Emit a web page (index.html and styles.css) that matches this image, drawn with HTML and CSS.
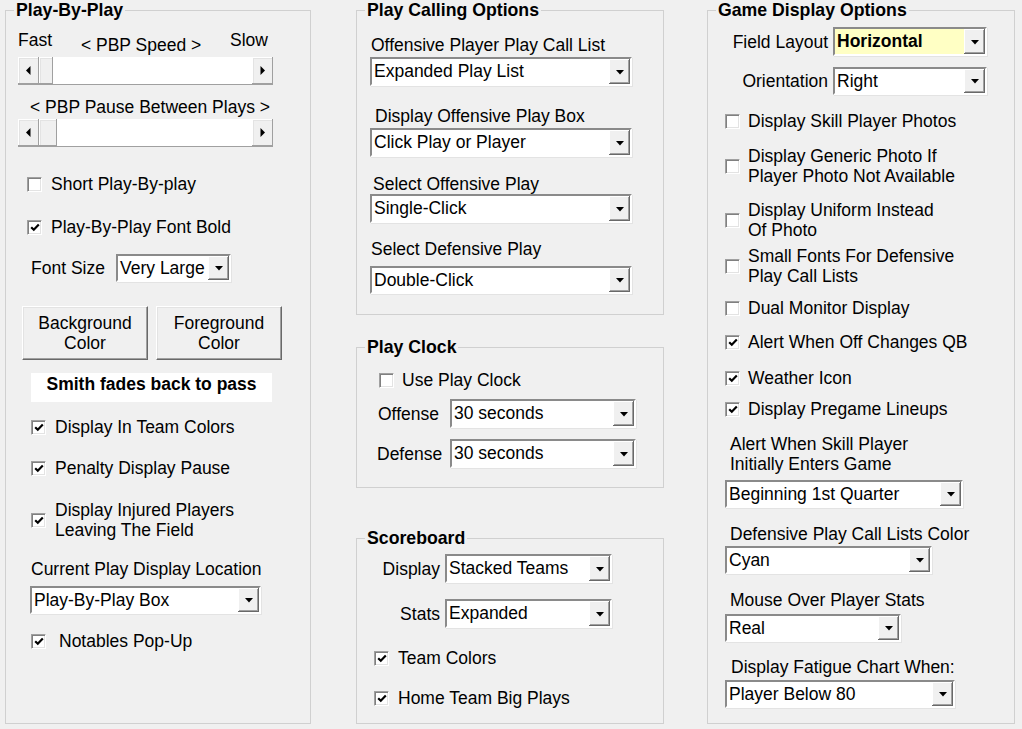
FILE: index.html
```html
<!DOCTYPE html>
<html>
<head>
<meta charset="utf-8">
<link rel="stylesheet" href="styles.css">
</head>
<body>
<div class="page">
  <section class="group g-left">
    <div class="title">Play-By-Play</div>
    <div class="speed-row"><span>Fast</span><span class="speed-mid">&lt; PBP Speed &gt;</span><span>Slow</span></div>
    <div class="hscroll sb1">
      <span class="sbtn"><svg width="5" height="9" viewBox="0 0 5 9"><polygon points="4.5,0 4.5,9 0,4.5" fill="#000"/></svg></span>
      <span class="thumb t1"></span><span class="track"></span>
      <span class="sbtn"><svg width="5" height="9" viewBox="0 0 5 9"><polygon points="0.5,0 0.5,9 5,4.5" fill="#000"/></svg></span>
    </div>
    <div class="pause">&lt; PBP Pause Between Plays &gt;</div>
    <div class="hscroll sb2">
      <span class="sbtn"><svg width="5" height="9" viewBox="0 0 5 9"><polygon points="4.5,0 4.5,9 0,4.5" fill="#000"/></svg></span>
      <span class="thumb t2"></span><span class="track"></span>
      <span class="sbtn"><svg width="5" height="9" viewBox="0 0 5 9"><polygon points="0.5,0 0.5,9 5,4.5" fill="#000"/></svg></span>
    </div>
    <div class="chk c-short"><span class="box"></span><span class="lbl g10">Short Play-By-play</span></div>
    <div class="chk c-bold"><span class="box"><svg width="10" height="9" viewBox="0 0 10 9"><path d="M1.2 4.2 L3.8 6.8 L8.8 1.6" stroke="#000" stroke-width="2.2" fill="none"/></svg></span><span class="lbl g10">Play-By-Play Font Bold</span></div>
    <div class="row r-fontsize"><span class="fs-label">Font Size</span>
      <div class="combo w115"><span class="cv">Very Large</span><span class="dd"><svg width="8" height="5" viewBox="0 0 8 5"><polygon points="0,0 8,0 4,4.5" fill="#000"/></svg></span></div>
    </div>
    <div class="row r-buttons">
      <div class="btn">Background<br>Color</div>
      <div class="btn">Foreground<br>Color</div>
    </div>
    <div class="playlabel">Smith fades back to pass</div>
    <div class="chk c-team"><span class="box"><svg width="10" height="9" viewBox="0 0 10 9"><path d="M1.2 4.2 L3.8 6.8 L8.8 1.6" stroke="#000" stroke-width="2.2" fill="none"/></svg></span><span class="lbl g10">Display In Team Colors</span></div>
    <div class="chk c-pen"><span class="box"><svg width="10" height="9" viewBox="0 0 10 9"><path d="M1.2 4.2 L3.8 6.8 L8.8 1.6" stroke="#000" stroke-width="2.2" fill="none"/></svg></span><span class="lbl g10">Penalty Display Pause</span></div>
    <div class="chk c-inj"><span class="box"><svg width="10" height="9" viewBox="0 0 10 9"><path d="M1.2 4.2 L3.8 6.8 L8.8 1.6" stroke="#000" stroke-width="2.2" fill="none"/></svg></span><span class="lbl g10">Display Injured Players<br>Leaving The Field</span></div>
    <div class="txt t-cur">Current Play Display Location</div>
    <div class="combo w231 cb-cur"><span class="cv">Play-By-Play Box</span><span class="dd"><svg width="8" height="5" viewBox="0 0 8 5"><polygon points="0,0 8,0 4,4.5" fill="#000"/></svg></span></div>
    <div class="chk c-not"><span class="box"><svg width="10" height="9" viewBox="0 0 10 9"><path d="M1.2 4.2 L3.8 6.8 L8.8 1.6" stroke="#000" stroke-width="2.2" fill="none"/></svg></span><span class="lbl g14">Notables Pop-Up</span></div>
  </section>

  <div class="col-mid">
    <section class="group g-a">
      <div class="title">Play Calling Options</div>
      <div class="txt a-l1">Offensive Player Play Call List</div>
      <div class="combo w262 a-c1"><span class="cv">Expanded Play List</span><span class="dd"><svg width="8" height="5" viewBox="0 0 8 5"><polygon points="0,0 8,0 4,4.5" fill="#000"/></svg></span></div>
      <div class="txt a-l2">Display Offensive Play Box</div>
      <div class="combo w262 a-c2"><span class="cv">Click Play or Player</span><span class="dd"><svg width="8" height="5" viewBox="0 0 8 5"><polygon points="0,0 8,0 4,4.5" fill="#000"/></svg></span></div>
      <div class="txt a-l3">Select Offensive Play</div>
      <div class="combo w262 a-c3"><span class="cv">Single-Click</span><span class="dd"><svg width="8" height="5" viewBox="0 0 8 5"><polygon points="0,0 8,0 4,4.5" fill="#000"/></svg></span></div>
      <div class="txt a-l4">Select Defensive Play</div>
      <div class="combo w262 a-c4"><span class="cv">Double-Click</span><span class="dd"><svg width="8" height="5" viewBox="0 0 8 5"><polygon points="0,0 8,0 4,4.5" fill="#000"/></svg></span></div>
    </section>

    <section class="group g-b">
      <div class="title">Play Clock</div>
      <div class="chk b-use"><span class="box"></span><span class="lbl g9">Use Play Clock</span></div>
      <div class="row b-off"><span class="b-label">Offense</span>
        <div class="combo w186"><span class="cv">30 seconds</span><span class="dd"><svg width="8" height="5" viewBox="0 0 8 5"><polygon points="0,0 8,0 4,4.5" fill="#000"/></svg></span></div>
      </div>
      <div class="row b-def"><span class="b-label">Defense</span>
        <div class="combo w186"><span class="cv">30 seconds</span><span class="dd"><svg width="8" height="5" viewBox="0 0 8 5"><polygon points="0,0 8,0 4,4.5" fill="#000"/></svg></span></div>
      </div>
    </section>

    <section class="group g-c">
      <div class="title">Scoreboard</div>
      <div class="row c-disp"><span class="c-label">Display</span>
        <div class="combo w167"><span class="cv">Stacked Teams</span><span class="dd"><svg width="8" height="5" viewBox="0 0 8 5"><polygon points="0,0 8,0 4,4.5" fill="#000"/></svg></span></div>
      </div>
      <div class="row c-stats"><span class="c-label">Stats</span>
        <div class="combo w167"><span class="cv">Expanded</span><span class="dd"><svg width="8" height="5" viewBox="0 0 8 5"><polygon points="0,0 8,0 4,4.5" fill="#000"/></svg></span></div>
      </div>
      <div class="chk c-tc"><span class="box"><svg width="10" height="9" viewBox="0 0 10 9"><path d="M1.2 4.2 L3.8 6.8 L8.8 1.6" stroke="#000" stroke-width="2.2" fill="none"/></svg></span><span class="lbl g10">Team Colors</span></div>
      <div class="chk c-home"><span class="box"><svg width="10" height="9" viewBox="0 0 10 9"><path d="M1.2 4.2 L3.8 6.8 L8.8 1.6" stroke="#000" stroke-width="2.2" fill="none"/></svg></span><span class="lbl g10">Home Team Big Plays</span></div>
    </section>
  </div>

  <section class="group g-right">
    <div class="title">Game Display Options</div>
    <div class="row r-field"><span class="r-label">Field Layout</span>
      <div class="combo w154 yellow"><span class="cv bold">Horizontal</span><span class="dd"><svg width="8" height="5" viewBox="0 0 8 5"><polygon points="0,0 8,0 4,4.5" fill="#000"/></svg></span></div>
    </div>
    <div class="row r-orient"><span class="r-label">Orientation</span>
      <div class="combo w154"><span class="cv">Right</span><span class="dd"><svg width="8" height="5" viewBox="0 0 8 5"><polygon points="0,0 8,0 4,4.5" fill="#000"/></svg></span></div>
    </div>
    <div class="chk rc rc1"><span class="box"></span><span class="lbl g9">Display Skill Player Photos</span></div>
    <div class="chk rc rc2"><span class="box"></span><span class="lbl g9">Display Generic Photo If<br>Player Photo Not Available</span></div>
    <div class="chk rc rc3"><span class="box"></span><span class="lbl g9">Display Uniform Instead<br>Of Photo</span></div>
    <div class="chk rc rc4"><span class="box"></span><span class="lbl g9">Small Fonts For Defensive<br>Play Call Lists</span></div>
    <div class="chk rc rc5"><span class="box"></span><span class="lbl g9">Dual Monitor Display</span></div>
    <div class="chk rc rc6"><span class="box"><svg width="10" height="9" viewBox="0 0 10 9"><path d="M1.2 4.2 L3.8 6.8 L8.8 1.6" stroke="#000" stroke-width="2.2" fill="none"/></svg></span><span class="lbl g9">Alert When Off Changes QB</span></div>
    <div class="chk rc rc7"><span class="box"><svg width="10" height="9" viewBox="0 0 10 9"><path d="M1.2 4.2 L3.8 6.8 L8.8 1.6" stroke="#000" stroke-width="2.2" fill="none"/></svg></span><span class="lbl g9">Weather Icon</span></div>
    <div class="chk rc rc8"><span class="box"><svg width="10" height="9" viewBox="0 0 10 9"><path d="M1.2 4.2 L3.8 6.8 L8.8 1.6" stroke="#000" stroke-width="2.2" fill="none"/></svg></span><span class="lbl g9">Display Pregame Lineups</span></div>
    <div class="txt r-l1">Alert When Skill Player<br>Initially Enters Game</div>
    <div class="combo w238 r-c1"><span class="cv">Beginning 1st Quarter</span><span class="dd"><svg width="8" height="5" viewBox="0 0 8 5"><polygon points="0,0 8,0 4,4.5" fill="#000"/></svg></span></div>
    <div class="txt r-l2">Defensive Play Call Lists Color</div>
    <div class="combo w207 r-c2"><span class="cv">Cyan</span><span class="dd"><svg width="8" height="5" viewBox="0 0 8 5"><polygon points="0,0 8,0 4,4.5" fill="#000"/></svg></span></div>
    <div class="txt r-l3">Mouse Over Player Stats</div>
    <div class="combo w176 r-c3"><span class="cv">Real</span><span class="dd"><svg width="8" height="5" viewBox="0 0 8 5"><polygon points="0,0 8,0 4,4.5" fill="#000"/></svg></span></div>
    <div class="txt r-l4">Display Fatigue Chart When:</div>
    <div class="combo w230 r-c4"><span class="cv">Player Below 80</span><span class="dd"><svg width="8" height="5" viewBox="0 0 8 5"><polygon points="0,0 8,0 4,4.5" fill="#000"/></svg></span></div>
  </section>
</div>
</body>
</html>
```

FILE: styles.css
```css
* { box-sizing: border-box; }
html, body { margin: 0; padding: 0; }
body {
  width: 1022px;
  height: 729px;
  overflow: hidden;
  background: #f0f0f0;
  font-family: "Liberation Sans", Arial, sans-serif;
  font-size: 17.5px;
  line-height: 20px;
  color: #000;
}
.page { display: flex; align-items: flex-start; padding-top: 10px; }

.group { border: 1px solid #d0d0d0; }
.title {
  font-weight: bold;
  font-size: 17.7px;
  width: fit-content;
  height: 20px;
  margin: -11px 0 0 8px;
  padding: 0 2px;
  background: #f0f0f0;
}
.g-left { margin-left: 5px; width: 306px; height: 714px; }
.col-mid { margin-left: 45px; width: 308px; display: flex; flex-direction: column; }
.g-a { height: 305px; }
.g-b { height: 141px; margin-top: 32px; }
.g-c { height: 186px; margin-top: 50px; }
.g-right { margin-left: 43px; width: 308px; height: 714px; }

.row { display: flex; align-items: center; }
.txt { width: fit-content; }

/* checkbox */
.chk { display: flex; align-items: center; }
.box {
  flex: none;
  width: 15px;
  height: 15px;
  background: #fff;
  border: 1px solid;
  border-color: #a0a0a0 #fff #fff #a0a0a0;
  box-shadow: inset 1px 1px #808080, inset -1px -1px #e3e3e3;
  display: flex;
  align-items: center;
  justify-content: center;
}
.lbl.g9 { margin-left: 8px; }
.lbl.g10 { margin-left: 9px; }
.lbl.g14 { margin-left: 13px; }

/* combo */
.combo {
  display: flex;
  height: 29px;
  background: #fff;
  border: 2px solid;
  border-color: #8a8a8a #fff #fff #8a8a8a;
  box-shadow: 1px 1px 0 #e3e3e3;
}
.combo .cv { flex: 1; padding-left: 2px; line-height: 24px; white-space: nowrap; overflow: hidden; }
.combo .bold { font-weight: bold; }
.combo.yellow { background: #ffffc4; }
.dd {
  flex: none;
  width: 21px;
  background: #f0f0f0;
  box-shadow: inset -1px -1px #696969, inset 1px 1px #fff, inset -2px -2px #a0a0a0;
  display: flex;
  align-items: center;
  justify-content: center;
  padding-top: 1px;
}
.w115 { width: 115px; }
.w154 { width: 154px; }
.w167 { width: 167px; }
.w176 { width: 176px; }
.w186 { width: 186px; }
.w207 { width: 207px; }
.w230 { width: 230px; }
.w231 { width: 231px; }
.w238 { width: 238px; }
.w262 { width: 262px; }

/* scrollbar */
.hscroll {
  display: flex;
  height: 28px;
  margin-left: 12px;
  width: 255px;
  background: #fff;
  border-bottom: 1px solid #a0a0a0;
}
.sbtn, .thumb {
  flex: none;
  background: #f0f0f0;
  box-shadow: inset -1px -1px #a0a0a0, inset 1px 1px #fff, inset 2px 2px #e3e3e3;
}
.sbtn { width: 21px; display: flex; align-items: center; justify-content: center; }
.thumb.t1 { width: 14px; }
.thumb.t2 { width: 18px; }
.track { flex: 1; background: #fff; }

/* left group */
.speed-row {
  display: flex;
  justify-content: space-between;
  align-items: flex-start;
  margin: 10px 0 0 12px;
  width: 250px;
}
.speed-mid { margin-top: 5px; }
.sb1 { margin-top: 2px; }
.pause { margin: 12px 0 0 24px; }
.sb2 { margin-top: 2px; }
.c-short { margin: 27px 0 0 21px; }
.c-bold { margin: 23px 0 0 21px; }
.r-fontsize { margin: 17px 0 0 25px; height: 28px; }
.r-fontsize .combo { height: 28px; }
.fs-label { width: 85px; }
.r-buttons { margin: 24px 0 0 16px; gap: 8px; }
.btn {
  width: 126px;
  height: 54px;
  background: #f0f0f0;
  border: 1px solid;
  border-color: #fff #696969 #696969 #fff;
  box-shadow: inset -1px -1px #a0a0a0, inset 1px 1px #e3e3e3;
  text-align: center;
  padding-top: 6px;
}
.playlabel {
  margin: 13px 0 0 25px;
  width: 241px;
  height: 29px;
  background: #fff;
  font-weight: bold;
  text-align: center;
  padding-top: 1px;
}
.c-team { margin: 15px 0 0 25px; }
.c-pen { margin: 21px 0 0 25px; }
.c-inj { margin: 22px 0 0 25px; }
.t-cur { margin: 19px 0 0 25px; }
.cb-cur { margin: 7px 0 0 24px; height: 28px; }
.c-not { margin: 17px 0 0 25px; }

/* play calling */
.a-l1 { margin: 15px 0 0 14px; }
.a-c1 { margin: 2px 0 0 13px; }
.a-l2 { margin: 20px 0 0 18px; }
.a-c2 { margin: 2px 0 0 13px; }
.a-l3 { margin: 17px 0 0 16px; }
.a-c3 { margin: 0 0 0 13px; }
.a-l4 { margin: 16px 0 0 14px; }
.a-c4 { margin: 7px 0 0 13px; height: 28px; }

/* play clock */
.b-use { margin: 13px 0 0 22px; }
.b-off { margin: 9px 0 0 21px; }
.b-def { margin: 11px 0 0 20px; }
.b-off .b-label { width: 72px; }
.b-def .b-label { width: 73px; }

/* scoreboard */
.c-label { width: 83px; margin-right: 5px; text-align: right; }
.c-disp { margin-top: 6px; }
.c-stats { margin-top: 16px; }
.c-tc { margin: 20px 0 0 17px; }
.c-home { margin: 20px 0 0 17px; }

/* game display */
.r-label { width: 120px; margin-right: 5px; text-align: right; }
.r-field { margin-top: 7px; }
.r-orient { margin-top: 11px; }
.r-orient .combo { height: 28px; }
.rc { margin-left: 17px; }
.rc1 { margin-top: 16px; }
.rc2 { margin-top: 15px; }
.rc3 { margin-top: 14px; }
.rc4 { margin-top: 6px; }
.rc5 { margin-top: 12px; }
.rc6 { margin-top: 14px; }
.rc7 { margin-top: 16px; }
.rc8 { margin-top: 11px; }
.r-l1 { margin: 15px 0 0 22px; }
.r-c1 { margin: 6px 0 0 17px; height: 28px; }
.r-l2 { margin: 16px 0 0 22px; }
.r-c2 { margin: 2px 0 0 17px; height: 28px; }
.r-l3 { margin: 16px 0 0 22px; }
.r-c3 { margin: 4px 0 0 17px; height: 28px; }
.r-l4 { margin: 15px 0 0 23px; }
.r-c4 { margin: 3px 0 0 17px; height: 28px; }
```
